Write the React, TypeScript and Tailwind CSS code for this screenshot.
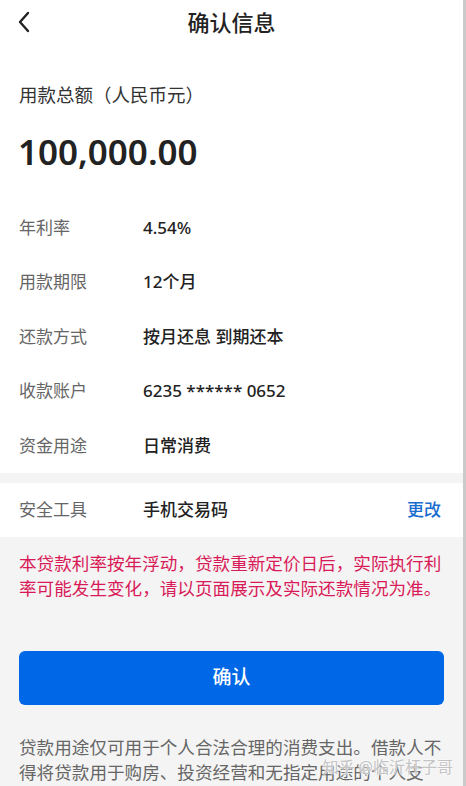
import React from "react";

const font = { fontFamily: '"Noto Sans", "Noto Sans CJK SC", sans-serif' };

const rows: [string, string][] = [
  ["年利率", "4.54%"],
  ["用款期限", "12个月"],
  ["还款方式", "按月还息 到期还本"],
  ["收款账户", "6235 ****** 0652"],
  ["资金用途", "日常消费"],
];

export default function App() {
  return (
    <div
      className="relative w-[466px] h-[786px] overflow-hidden bg-[#f4f4f4] border-r-[3px] border-[#cacaca] flex flex-col"
      style={font}
    >
      <div className="shrink-0 bg-white flex flex-col">
        <div className="h-[46px] flex items-center px-[17px]">
          <div className="w-[30px] flex items-center -mt-[2px]">
            <svg width="14" height="22" viewBox="0 0 14 22" fill="none">
              <polyline points="11,2 3,11 11,20" stroke="#222" strokeWidth="2.4" strokeLinecap="round" strokeLinejoin="round" />
            </svg>
          </div>
          <div className="flex-1 text-center text-[22px] font-medium text-[#222] leading-[28px] pr-[30px] -mt-[3px]">确认信息</div>
        </div>
        <div className="mt-[36px] px-[19px] text-[18.5px] leading-[26px] text-[#333]">用款总额（人民币元）</div>
        <div className="mt-[22px] px-[18px] text-[35px] leading-[44px] font-semibold text-[#222]">100,000.00</div>
        <div className="mt-[26px] flex flex-col">
          {rows.map(([k, v]) => (
            <div key={k} className="shrink-0 h-[54.5px] flex items-center px-[19px]">
              <div className="w-[124px] text-[17px] text-[#666]">{k}</div>
              <div className="text-[17px] font-medium text-[#222]">{v}</div>
            </div>
          ))}
        </div>
      </div>
      <div className="shrink-0 h-[10px]" />
      <div className="shrink-0 bg-white h-[54px] flex items-center px-[19px]">
        <div className="w-[124px] text-[17px] text-[#666]">安全工具</div>
        <div className="flex-1 text-[17px] font-medium text-[#222]">手机交易码</div>
        <div className="text-[17px] font-medium text-[#1a6dd0] pr-[3px]">更改</div>
      </div>
      <div className="shrink-0 pt-[14px] px-[19px] text-[17.6px] leading-[25px] text-[#d81b58]">
        本贷款利率按年浮动，贷款重新定价日后，实际执行利率可能发生变化，请以页面展示及实际还款情况为准。
      </div>
      <div className="shrink-0 mt-[50px] mx-[19px]">
        <button className="w-full h-[54px] rounded-[6px] bg-[#0067e6] text-white text-[19px] font-medium flex items-center justify-center">
          确认
        </button>
      </div>
      <div className="shrink-0 mt-[30px] px-[19px] text-[17.6px] leading-[25.5px] text-[#666]">
        贷款用途仅可用于个人合法合理的消费支出。借款人不得将贷款用于购房、投资经营和无指定用途的个人支出。
      </div>
      <div
        className="absolute right-[10px] top-[757px] text-[16px] leading-[20px] text-[#c4c4c4]"
        style={{ textShadow: "0 0 2px #fff, 0 0 2px #fff" }}
      >
        知乎 @临沂杆子哥
      </div>
    </div>
  );
}
